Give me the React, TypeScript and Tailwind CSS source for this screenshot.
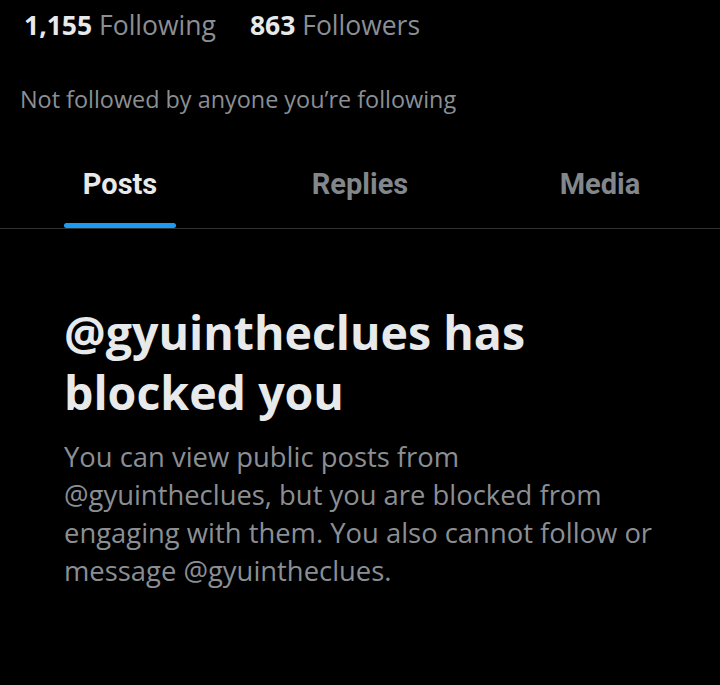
export default function App() {
  const tabs = ["Posts", "Replies", "Media"];

  return (
    <div className="w-[720px] h-[685px] bg-black overflow-hidden" style={{ fontFamily: "'Open Sans', 'Noto Sans', sans-serif" }}>
      {/* stats */}
      <div className="flex items-center gap-[34px] pl-[24px] pt-[4px] h-[46px] text-[26.5px] leading-none">
        <div>
          <span className="font-bold text-[#e7e9ea]">1,155</span>{" "}
          <span className="text-[#8b8f94]">Following</span>
        </div>
        <div>
          <span className="font-bold text-[#e7e9ea]">863</span>{" "}
          <span className="text-[#8b8f94]">Followers</span>
        </div>
      </div>

      <div className="pl-[20px] mt-[42px] text-[23.4px] leading-none text-[#8b8f94]">
        Not followed by anyone you’re following
      </div>

      {/* tabs */}
      <div className="mt-[59px] grid grid-cols-3 border-b border-[#2f3336]" style={{ fontFamily: "Roboto, sans-serif" }}>
        {tabs.map((t, i) => (
          <div key={t} className="flex flex-col items-center">
            <div className={`text-[29px] font-bold leading-none ${i === 0 ? "text-[#e7e9ea]" : "text-[#82878c]"}`}>
              {t}
            </div>
            <div className={`mt-[24px] h-[5px] w-[112px] rounded-full ${i === 0 ? "bg-[#1d9bf0]" : "bg-transparent"}`} />
          </div>
        ))}
      </div>

      {/* blocked message */}
      <div className="px-[64px] pt-[73px]">
        <h1 className="max-w-[500px] text-[46.5px] font-bold leading-[60px] text-[#e7e9ea]">
          @gyuintheclues has blocked you
        </h1>
        <p className="mt-[16px] max-w-[600px] text-[27.4px] leading-[38px] text-[#8b8f94]">
          You can view public posts from @gyuintheclues, but you are blocked from engaging with them. You also cannot follow or message @gyuintheclues.
        </p>
      </div>
    </div>
  );
}
